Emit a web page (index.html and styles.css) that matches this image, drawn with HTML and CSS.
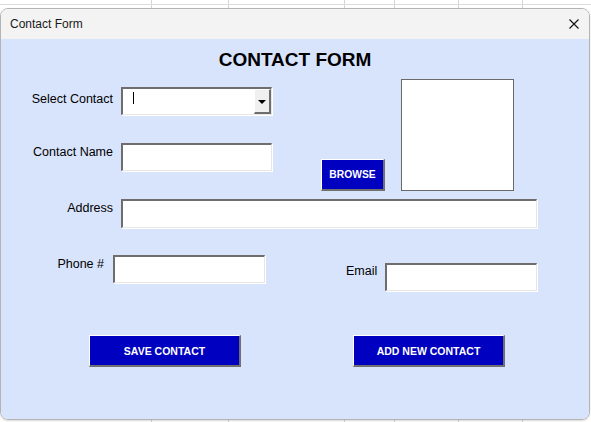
FILE: index.html
```html
<!DOCTYPE html>
<html>
<head>
<meta charset="utf-8">
<link rel="stylesheet" href="styles.css">
</head>
<body>
<div class="sheet"></div>
<div class="window">
  <div class="titlebar">
    <span class="title">Contact Form</span>
    <svg class="close" width="10" height="10" viewBox="0 0 10 10"><path d="M0.5 0.5 L9.5 9.5 M9.5 0.5 L0.5 9.5" stroke="#111" stroke-width="1.1" fill="none"/></svg>
  </div>
  <div class="form">
    <h1 class="heading">CONTACT FORM</h1>
    <div class="top">
      <div class="fields">
        <div class="row row-select">
          <label class="lbl lbl-select">Select Contact</label>
          <div class="input combo">
            <span class="caret"></span>
            <span class="drop"><span class="arrow"></span></span>
          </div>
        </div>
        <div class="row row-name">
          <label class="lbl">Contact Name</label>
          <div class="input w151"></div>
        </div>
      </div>
      <button class="btn browse">BROWSE</button>
      <div class="photo"></div>
    </div>
    <div class="row row-address">
      <label class="lbl">Address</label>
      <div class="input wide"></div>
    </div>
    <div class="row row-contact">
      <label class="lbl lbl-phone">Phone #</label>
      <div class="input w152"></div>
      <div class="email-group">
        <label class="lbl lbl-email">Email</label>
        <div class="input w152"></div>
      </div>
    </div>
    <div class="actions">
      <button class="btn big save">SAVE CONTACT</button>
      <button class="btn big add">ADD NEW CONTACT</button>
    </div>
  </div>
</div>
</body>
</html>
```

FILE: styles.css
```css
html, body {
  margin: 0;
  padding: 0;
  width: 591px;
  height: 422px;
  overflow: hidden;
  background: #ffffff;
  font-family: "Liberation Sans", Arial, sans-serif;
}

.sheet {
  width: 591px;
  height: 422px;
  background-color: #ffffff;
  background-image:
    linear-gradient(#dcdcdc, #dcdcdc),
    linear-gradient(90deg, transparent 151px, #d4d4d4 151px, #d4d4d4 152px, transparent 152px,
      transparent 228px, #d4d4d4 228px, #d4d4d4 229px, transparent 229px,
      transparent 344px, #d4d4d4 344px, #d4d4d4 345px, transparent 345px,
      transparent 394px, #d4d4d4 394px, #d4d4d4 395px, transparent 395px,
      transparent 458px, #d4d4d4 458px, #d4d4d4 459px, transparent 459px,
      transparent 522px, #d4d4d4 522px, #d4d4d4 523px, transparent 523px);
  background-size: 591px 1px, 591px 422px;
  background-position: 0 4px, 0 0;
  background-repeat: no-repeat;
}

.window {
  position: absolute;
  left: 0;
  top: 8px;
  width: 588px;
  height: 410px;
  border: 1px solid #b4b4b4;
  border-radius: 8px;
  overflow: hidden;
  display: flex;
  flex-direction: column;
  box-shadow: 0 1px 2px rgba(0,0,0,0.15);
}

.titlebar {
  height: 30px;
  flex: none;
  background: #f3f3f3;
  display: flex;
  align-items: center;
  justify-content: space-between;
  padding: 0 9px 0 9px;
}

.title {
  font-size: 12px;
  color: #1a1a1a;
  line-height: 14px;
}

.close {
  display: block;
  margin-right: 1px;
}

.form {
  flex: 1;
  background: #d8e4fc;
  display: flex;
  flex-direction: column;
}

.heading {
  margin: 10px 0 0 0;
  font-size: 19px;
  line-height: 22px;
  font-weight: bold;
  text-align: center;
  color: #000;
}

.top {
  display: flex;
  align-items: flex-end;
  margin-top: 8px;
}

.fields {
  display: flex;
  flex-direction: column;
  align-self: flex-start;
}

.row {
  display: flex;
  align-items: flex-start;
}

.row-select { margin-top: 8px; }
.row-name { margin-top: 28px; }
.row-address { margin-top: 8px; }
.row-contact { margin-top: 27px; }

.lbl {
  width: 112px;
  margin-right: 8px;
  text-align: right;
  font-size: 12.5px;
  line-height: 15px;
  color: #000;
  padding-top: 2px;
  white-space: nowrap;
}

.lbl-select { padding-top: 5px; }

.lbl-phone {
  width: 103px;
  margin-right: 9px;
}

.email-group {
  display: flex;
  align-items: flex-start;
  margin-left: 81px;
  margin-top: 8px;
}

.lbl-email {
  width: auto;
  margin-right: 8px;
  padding-top: 1px;
}

.input {
  box-sizing: border-box;
  height: 28px;
  background: #fff;
  border-style: solid;
  border-width: 2px 1px 1px 2px;
  border-color: #6e6e6e #e6e6e6 #e6e6e6 #6e6e6e;
  box-shadow: 1px 1px 0 #ffffff;
}

.w151 { width: 151px; }
.w152 { width: 152px; }
.wide { width: 416px; height: 29px; }

.combo {
  width: 151px;
  display: flex;
  align-items: stretch;
  justify-content: space-between;
}

.caret {
  display: block;
  width: 1px;
  height: 12px;
  background: #000;
  margin: 3px 0 0 10px;
}

.drop {
  box-sizing: border-box;
  width: 17px;
  background: #f0f0f0;
  border-style: solid;
  border-width: 1px 2px 2px 1px;
  border-color: #ffffff #6e6e6e #6e6e6e #ffffff;
  display: flex;
  align-items: center;
  justify-content: center;
}

.arrow {
  width: 0;
  height: 0;
  border-left: 4px solid transparent;
  border-right: 4px solid transparent;
  border-top: 4px solid #000;
  margin-top: 2px;
}

.btn {
  box-sizing: border-box;
  background: #0000c0;
  color: #fff;
  font-family: "Liberation Sans", Arial, sans-serif;
  font-weight: bold;
  font-size: 10.5px;
  border-style: solid;
  border-width: 1px 2px 2px 1px;
  border-color: #ffffff #707070 #707070 #ffffff;
  padding: 0;
  margin: 0;
  cursor: default;
}

.browse {
  width: 64px;
  height: 32px;
  margin-left: 49px;
  font-size: 10.3px;
}

.photo {
  box-sizing: border-box;
  width: 113px;
  height: 112px;
  background: #fff;
  border: 1px solid #6a6a6a;
  margin-left: 16px;
}

.actions {
  display: flex;
  margin-top: 44px;
  padding-left: 88px;
  gap: 112px;
}

.big {
  width: 152px;
  height: 32px;
}
```
